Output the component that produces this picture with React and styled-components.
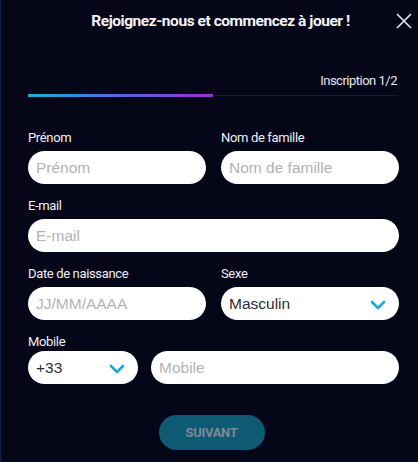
import styled, { createGlobalStyle } from 'styled-components';

const GlobalStyle = createGlobalStyle`
  html, body {
    margin: 0;
    padding: 0;
    background: #050618;
  }
  * { box-sizing: border-box; }
`;

const colors = {
  bg: '#050618',
  text: '#f2f3f7',
  placeholder: '#b3b3b3',
  cyan: '#1ba8d8',
  button: '#0f5a73',
};

const Chevron = () => (
  <svg width="16" height="10" viewBox="0 0 16 10">
    <path d="M2 2 L8 8 L14 2" fill="none" stroke={colors.cyan} strokeWidth="2.6" strokeLinecap="round" strokeLinejoin="round" />
  </svg>
);

const App = () => {
  return (
    <>
      <GlobalStyle />
      <Modal>
        <Header>
          <Title>Rejoignez-nous et commencez à jouer !</Title>
          <CloseButton aria-label="close">
            <svg width="16" height="16" viewBox="0 0 16 16">
              <path d="M1 1 L15 15 M15 1 L1 15" stroke="#e8e8ee" strokeWidth="1.6" />
            </svg>
          </CloseButton>
        </Header>
        <Step>Inscription 1/2</Step>
        <Progress>
          <ProgressFill $value={50} />
        </Progress>
        <Form>
          <Row>
            <Field>
              <Label>Prénom</Label>
              <Input placeholder="Prénom" />
            </Field>
            <Field>
              <Label>Nom de famille</Label>
              <Input placeholder="Nom de famille" />
            </Field>
          </Row>
          <Field>
            <Label>E-mail</Label>
            <Input placeholder="E-mail" />
          </Field>
          <Row>
            <Field>
              <Label>Date de naissance</Label>
              <Input placeholder="JJ/MM/AAAA" />
            </Field>
            <Field>
              <Label>Sexe</Label>
              <Select>
                <span>Masculin</span>
                <Chevron />
              </Select>
            </Field>
          </Row>
          <Field $tight>
            <Label>Mobile</Label>
            <PhoneRow>
              <Select>
                <span>+33</span>
                <Chevron />
              </Select>
              <Input placeholder="Mobile" />
            </PhoneRow>
          </Field>
        </Form>
        <Footer>
          <NextButton disabled>SUIVANT</NextButton>
        </Footer>
      </Modal>
    </>
  );
};

const Modal = styled.div`
  width: 418px;
  height: 462px;
  background: ${colors.bg};
  border-left: 1px solid #0b2140;
  padding: 0 19px 0 27px;
  font-family: Roboto, 'Liberation Sans', sans-serif;
  color: ${colors.text};
`;

const Header = styled.div`
  position: relative;
  height: 42px;
  display: flex;
  align-items: center;
  justify-content: center;
`;

const Title = styled.h1`
  margin: 0 0 0 14px;
  font-size: 15.5px;
  font-weight: 700;
  letter-spacing: -0.45px;
  color: #f4f4f8;
`;

const CloseButton = styled.button`
  position: absolute;
  right: -13px;
  top: 13px;
  background: none;
  border: none;
  padding: 0;
  cursor: pointer;
  line-height: 0;
`;

const Step = styled.div`
  margin-top: 31px;
  text-align: right;
  padding-right: 2px;
  font-size: 13px;
  letter-spacing: -0.5px;
  color: #e4e6ee;
`;

const Progress = styled.div`
  margin-top: 6px;
  height: 3px;
  width: 370px;
  background: linear-gradient(to bottom, transparent 1px, #1a1b2b 1px, #1a1b2b 2px, transparent 2px);
`;

const ProgressFill = styled.div`
  height: 3px;
  width: ${(p) => p.$value}%;
  background: linear-gradient(90deg, #17b0d6 0%, #5a5fd8 55%, #a62ad0 100%);
`;

const Form = styled.div`
  margin-top: 32px;
  width: 371px;
  display: flex;
  flex-direction: column;
  gap: 13px;
`;

const Row = styled.div`
  display: grid;
  grid-template-columns: 1fr 1fr;
  column-gap: 15px;
`;

const Field = styled.div`
  display: flex;
  flex-direction: column;
  gap: ${(p) => (p.$tight ? '1px' : '5px')};
`;

const Label = styled.label`
  font-size: 13px;
  letter-spacing: -0.35px;
  color: #eef0f5;
  line-height: 17px;
`;

const Input = styled.input`
  width: 100%;
  height: 33px;
  border: none;
  border-radius: 17px;
  background: #fff;
  padding: 0 14px 0 8px;
  font-family: 'Liberation Sans', Arial, sans-serif;
  font-size: 15.5px;
  color: #333;
  outline: none;
  &::placeholder {
    color: ${colors.placeholder};
  }
`;

const Select = styled.div`
  height: 33px;
  border-radius: 17px;
  background: #fff;
  display: flex;
  align-items: center;
  justify-content: space-between;
  padding: 0 13px 0 8px;
  font-family: 'Liberation Sans', Arial, sans-serif;
  font-size: 15.5px;
  color: #2c2c34;
  svg {
    margin-top: 2px;
  }
`;

const PhoneRow = styled.div`
  display: grid;
  grid-template-columns: 110px 1fr;
  column-gap: 13px;
`;

const Footer = styled.div`
  display: flex;
  justify-content: center;
  margin-top: 31px;
  padding-right: 4px;
`;

const NextButton = styled.button`
  width: 106px;
  height: 35px;
  border: none;
  border-radius: 18px;
  background: ${colors.button};
  color: #7d8898;
  font-family: Roboto, 'Liberation Sans', sans-serif;
  font-weight: 700;
  font-size: 13px;
  letter-spacing: -0.3px;
`;

export default App;
